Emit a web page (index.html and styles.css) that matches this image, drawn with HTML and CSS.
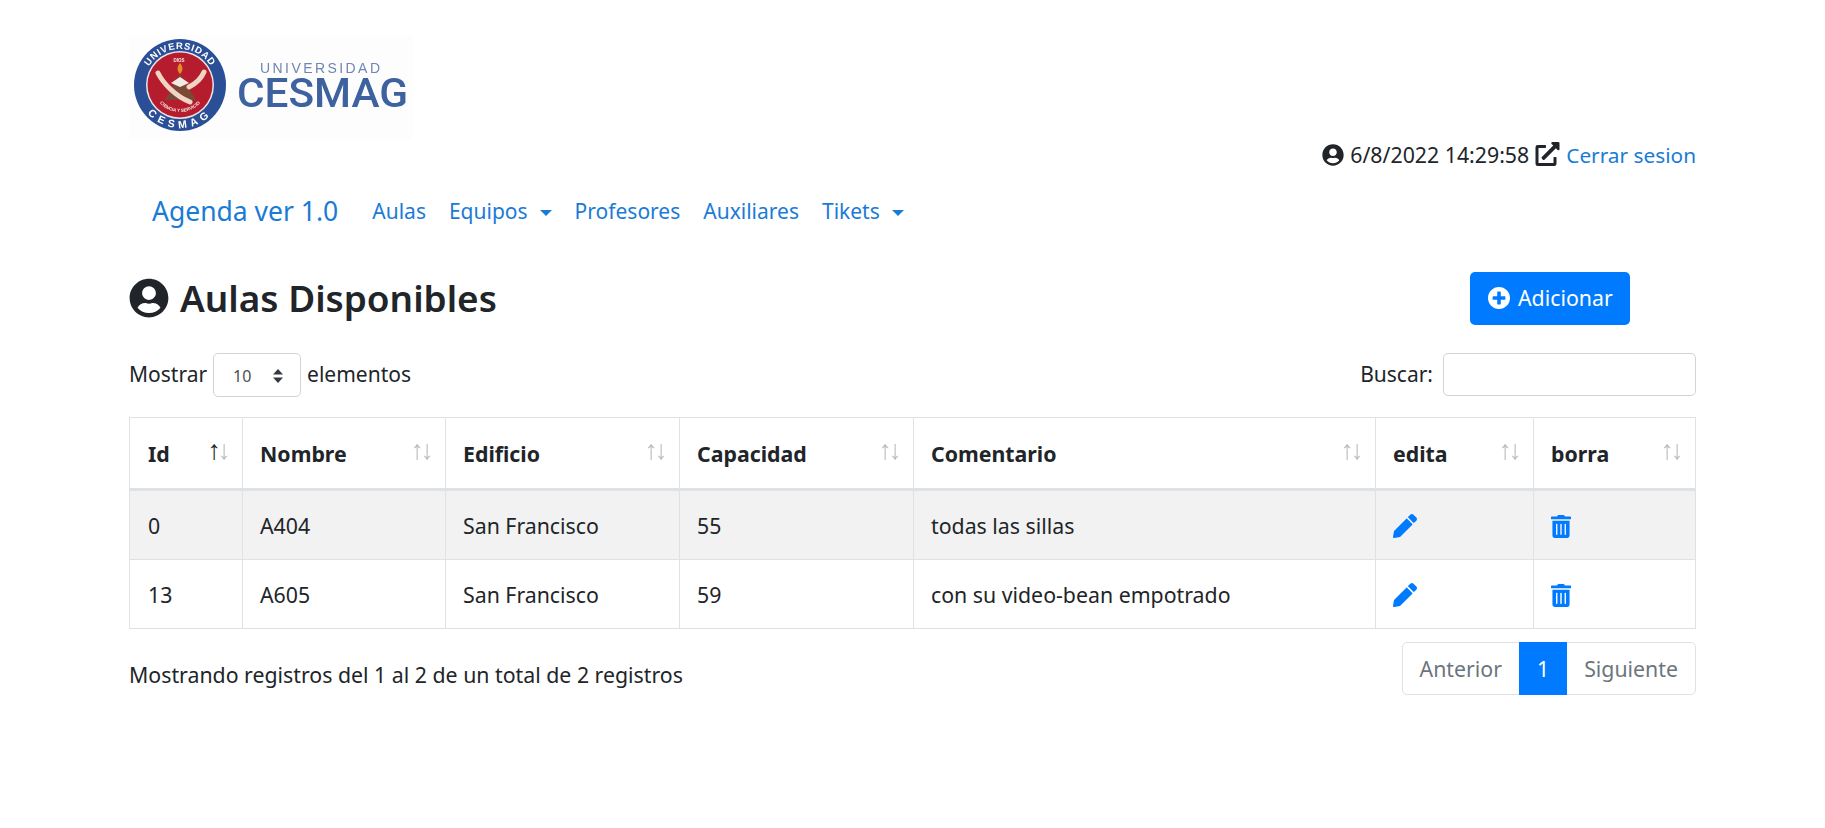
FILE: index.html
```html
<!DOCTYPE html>
<html lang="es">
<head>
<meta charset="utf-8">
<title>Agenda ver 1.0</title>
<link rel="stylesheet" href="styles.css">
</head>
<body>
<div class="container">
  <svg class="logo" viewBox="0 0 284 104" width="284" height="104" aria-label="Universidad CESMAG">
    <defs>
      <filter id="soft"><feGaussianBlur stdDeviation="0.5"/></filter>
      <path id="arcTop" d="M15 50 A36 36 0 0 1 87 50"/>
      <path id="arcBottom" d="M8 50 A43 43 0 0 0 94 50"/>
      <path id="arcSmall" d="M24 50 A27 27 0 0 0 78 50"/>
    </defs>
    <rect width="284" height="104" fill="#fdfdfe"/>
    <g filter="url(#soft)">
      <circle cx="51" cy="50" r="46" fill="#2b4f96"/>
      <circle cx="51" cy="50" r="34" fill="#e8e6ea"/>
      <circle cx="51" cy="50" r="32.500" fill="#b51f2e"/>
      <text class="seal-text"><textPath href="#arcTop" startOffset="50%" text-anchor="middle">UNIVERSIDAD</textPath></text>
      <text class="seal-text seal-bottom"><textPath href="#arcBottom" startOffset="50%" text-anchor="middle">CESMAG</textPath></text>
      <text class="seal-small"><textPath href="#arcSmall" startOffset="50%" text-anchor="middle">CIENCIA Y SERVICIO</textPath></text>
      <text class="seal-small" x="50" y="27" text-anchor="middle">DIOS</text>
      <path d="M51 39l16 26H36z" fill="#7a4a36"/>
      <path d="M42 48l9-6 9 6-9 4z" fill="#f1ebe5"/>
      <path d="M51 28c3.500 4 3 8 0 11-3-3-3.500-7 0-11z" fill="#e8892b"/>
      <path d="M29 38c5 10 17 23 32 29" fill="none" stroke="#f1d5c4" stroke-width="5" stroke-linecap="round"/>
      <path d="M75 37c-3 7-9 12-15 15" fill="none" stroke="#f1d5c4" stroke-width="5" stroke-linecap="round"/>
      <text class="brand-top" x="131" y="38" textLength="120" lengthAdjust="spacing">UNIVERSIDAD</text>
      <text class="brand-main" x="108" y="72" textLength="171" lengthAdjust="spacingAndGlyphs">CESMAG</text>
    </g>
  </svg>

  <div class="session">
    <svg class="ico ico-session" viewBox="0 0 496 512"><path d="M248 8C111 8 0 119 0 256s111 248 248 248 248-111 248-248S385 8 248 8zm0 96c48.600 0 88 39.400 88 88s-39.400 88-88 88-88-39.400-88-88 39.400-88 88-88zm0 344c-58.700 0-111.300-26.600-146.500-68.200 18.800-35.400 55.600-59.800 98.500-59.800 2.400 0 4.800.4 7.100 1.100 13 4.200 26.600 6.900 40.900 6.900 14.300 0 28-2.700 40.900-6.900 2.300-.7 4.700-1.100 7.100-1.100 42.900 0 79.700 24.400 98.500 59.800C359.300 421.400 306.700 448 248 448z"/></svg>
    <span>6/8/2022 14:29:58</span>
    <svg class="ico ico-exit" viewBox="0 0 512 512"><path d="M432 320h-32a16 16 0 0 0-16 16v112H64V128h144a16 16 0 0 0 16-16V80a16 16 0 0 0-16-16H48A48 48 0 0 0 0 112v352a48 48 0 0 0 48 48h352a48 48 0 0 0 48-48V336a16 16 0 0 0-16-16zM488 0H360c-21.370 0-32.050 25.910-17 41l35.730 35.730L135 320.370a24 24 0 0 0 0 34L157.670 377a24 24 0 0 0 34 0l243.610-243.680L471 169c15 15 41 4.500 41-17V24a24 24 0 0 0-24-24z"/></svg>
    <a class="logout" href="#">Cerrar sesion</a>
  </div>

  <nav class="nav">
    <a class="brand" href="#">Agenda ver 1.0</a>
    <a href="#">Aulas</a>
    <a href="#" class="dropdown">Equipos</a>
    <a href="#">Profesores</a>
    <a href="#">Auxiliares</a>
    <a href="#" class="dropdown">Tikets</a>
  </nav>

  <div class="title-row">
    <h1>
      <svg class="ico ico-title" viewBox="0 0 496 512"><path d="M248 8C111 8 0 119 0 256s111 248 248 248 248-111 248-248S385 8 248 8zm0 96c48.600 0 88 39.400 88 88s-39.400 88-88 88-88-39.400-88-88 39.400-88 88-88zm0 344c-58.700 0-111.300-26.600-146.500-68.200 18.800-35.400 55.600-59.800 98.500-59.800 2.400 0 4.800.4 7.100 1.100 13 4.200 26.600 6.900 40.900 6.900 14.300 0 28-2.700 40.900-6.900 2.300-.7 4.700-1.100 7.100-1.100 42.900 0 79.700 24.400 98.500 59.800C359.300 421.400 306.700 448 248 448z"/></svg>
      Aulas Disponibles
    </h1>
    <a class="btn" href="#">
      <svg class="ico ico-btn" viewBox="8 8 496 496"><path d="M256 8C119 8 8 119 8 256s111 248 248 248 248-111 248-248S393 8 256 8zm144 276c0 6.600-5.400 12-12 12h-92v92c0 6.600-5.400 12-12 12h-56c-6.600 0-12-5.400-12-12v-92h-92c-6.600 0-12-5.400-12-12v-56c0-6.600 5.400-12 12-12h92v-92c0-6.600 5.400-12 12-12h56c6.600 0 12 5.400 12 12v92h92c6.600 0 12 5.400 12 12v56z"/></svg>
      Adicionar
    </a>
  </div>

  <div class="filters">
    <div class="length">
      <span>Mostrar</span>
      <div class="select">
        <span>10</span>
        <svg class="carets" viewBox="0 0 12 16"><path d="M6 1l5 5.500H1zM6 15L1 9.500h10z"/></svg>
      </div>
      <span>elementos</span>
    </div>
    <label class="search">Buscar: <input type="text"></label>
  </div>

  <table class="grid">
    <colgroup>
      <col class="c-id"><col class="c-name"><col class="c-building"><col class="c-cap"><col class="c-comment"><col class="c-edit"><col class="c-del">
    </colgroup>
    <thead>
      <tr>
        <th class="sort sort-active">Id</th>
        <th class="sort">Nombre</th>
        <th class="sort">Edificio</th>
        <th class="sort">Capacidad</th>
        <th class="sort">Comentario</th>
        <th class="sort">edita</th>
        <th class="sort">borra</th>
      </tr>
    </thead>
    <tbody>
      <tr class="odd">
        <td>0</td><td>A404</td><td>San Francisco</td><td>55</td><td>todas las sillas</td>
        <td><svg class="ico ico-pencil" viewBox="0 0 512 512"><path d="M497.900 142.100l-46.100 46.100c-4.700 4.700-12.300 4.700-17 0l-111-111c-4.700-4.700-4.700-12.300 0-17l46.100-46.100c18.700-18.700 49.100-18.700 67.900 0l60.100 60.100c18.800 18.700 18.800 49.100 0 67.900zM284.200 99.800L21.600 362.400.4 483.900c-2.900 16.400 11.400 30.600 27.800 27.800l121.500-21.300 262.600-262.600c4.700-4.700 4.700-12.300 0-17l-111-111c-4.800-4.700-12.400-4.700-17.100 0z"/></svg></td>
        <td><svg class="ico ico-trash" viewBox="0 0 448 512"><path d="M32 464a48 48 0 0 0 48 48h288a48 48 0 0 0 48-48V128H32zm272-256a16 16 0 0 1 32 0v224a16 16 0 0 1-32 0zm-96 0a16 16 0 0 1 32 0v224a16 16 0 0 1-32 0zm-96 0a16 16 0 0 1 32 0v224a16 16 0 0 1-32 0zM432 32H312l-9.400-18.700A24 24 0 0 0 281.100 0H166.800a23.720 23.720 0 0 0-21.400 13.300L136 32H16A16 16 0 0 0 0 48v32a16 16 0 0 0 16 16h416a16 16 0 0 0 16-16V48a16 16 0 0 0-16-16z"/></svg></td>
      </tr>
      <tr>
        <td>13</td><td>A605</td><td>San Francisco</td><td>59</td><td>con su video-bean empotrado</td>
        <td><svg class="ico ico-pencil" viewBox="0 0 512 512"><path d="M497.900 142.100l-46.100 46.100c-4.700 4.700-12.300 4.700-17 0l-111-111c-4.700-4.700-4.700-12.300 0-17l46.100-46.100c18.700-18.700 49.100-18.700 67.900 0l60.100 60.100c18.800 18.700 18.800 49.100 0 67.900zM284.200 99.800L21.600 362.400.4 483.900c-2.900 16.400 11.400 30.600 27.800 27.800l121.500-21.300 262.600-262.600c4.700-4.700 4.700-12.300 0-17l-111-111c-4.800-4.700-12.400-4.700-17.100 0z"/></svg></td>
        <td><svg class="ico ico-trash" viewBox="0 0 448 512"><path d="M32 464a48 48 0 0 0 48 48h288a48 48 0 0 0 48-48V128H32zm272-256a16 16 0 0 1 32 0v224a16 16 0 0 1-32 0zm-96 0a16 16 0 0 1 32 0v224a16 16 0 0 1-32 0zm-96 0a16 16 0 0 1 32 0v224a16 16 0 0 1-32 0zM432 32H312l-9.400-18.700A24 24 0 0 0 281.100 0H166.800a23.720 23.720 0 0 0-21.400 13.300L136 32H16A16 16 0 0 0 0 48v32a16 16 0 0 0 16 16h416a16 16 0 0 0 16-16V48a16 16 0 0 0-16-16z"/></svg></td>
      </tr>
    </tbody>
  </table>

  <div class="footer">
    <div class="info">Mostrando registros del 1 al 2 de un total de 2 registros</div>
    <div class="pager">
      <a href="#">Anterior</a>
      <a href="#" class="current">1</a>
      <a href="#">Siguiente</a>
    </div>
  </div>
</div>
</body>
</html>
```
FILE: styles.css
```css
* { box-sizing: border-box; }
html, body { margin: 0; padding: 0; background: #fff; }
body {
  font-family: "Noto Sans", "Open Sans", sans-serif;
  font-size: 21.300px;
  line-height: 30px;
  color: #212529;
}
a { color: #1a7bd6; text-decoration: none; }
.container { padding: 35px 129px 0 129px; }
.ico { display: inline-block; fill: currentColor; flex: none; }

.logo { display: block; }
.seal-text { font: bold 9.500px "Liberation Sans", sans-serif; fill: #fff; letter-spacing: .8px; }
.seal-bottom { letter-spacing: 4.500px; font-size: 10.500px; }
.seal-small { font: bold 4.500px "Liberation Sans", sans-serif; fill: #f6e9e6; }
.brand-top { font: 14px "Liberation Sans", sans-serif; fill: #6f86b3; }
.brand-main { font: 500 40px Roboto, "Liberation Sans", sans-serif; fill: #3d629f; }

.session { display: flex; justify-content: flex-end; align-items: center; gap: 6px; height: 30px; margin-top: 1px; }
.logout { font-size: 20.800px; }
.ico-session { width: 22px; height: 22px; }
.ico-exit { width: 25px; height: 24px; margin-bottom: 2px; }

.nav { display: flex; align-items: center; margin-top: 16px; height: 50px; padding-left: 23px; gap: 23px; font-size: 21px; }
.brand { font-size: 26.500px; margin-right: 11px; }
.dropdown::after {
  content: "";
  display: inline-block;
  margin-left: 12px;
  vertical-align: 3px;
  border-top: 6px solid;
  border-left: 6px solid transparent;
  border-right: 6px solid transparent;
}

.title-row { display: flex; justify-content: space-between; align-items: center; margin-top: 35px; height: 54px; padding-right: 66px; }
h1 { display: flex; align-items: center; gap: 11px; margin: 0; font-size: 36.900px; line-height: 42px; font-weight: 600; }
.ico-title { width: 40px; height: 40px; }
.btn { display: flex; align-items: center; gap: 8px; height: 53px; width: 160px; padding-left: 18px; border-radius: 5px; background: #007bff; color: #fff; }
.ico-btn { width: 22px; height: 22px; }

.filters { display: flex; justify-content: space-between; align-items: center; margin-top: 27px; height: 44px; font-size: 21px; }
.length { display: flex; align-items: center; gap: 6px; }
.select { display: flex; align-items: center; justify-content: space-between; width: 88px; height: 44px; padding: 2px 16px 0 19px; margin-top: 2px; border: 1px solid #ced4da; border-radius: 5px; font-size: 16px; color: #495057; }
.carets { width: 12px; height: 16px; fill: #343a40; }
.search { display: flex; align-items: center; gap: 10px; }
.search input { width: 253px; height: 43px; border: 1px solid #ced4da; border-radius: 5px; background: #fff; }

.grid { width: 1566px; margin-top: 21px; border-collapse: collapse; table-layout: fixed; }
.c-id { width: 113px; } .c-name { width: 203px; } .c-building { width: 234px; } .c-cap { width: 234px; }
.c-comment { width: 462px; } .c-edit { width: 158px; } .c-del { width: 162px; }
.grid th, .grid td { border: 1px solid #dee2e6; padding: 2px 17px 0; text-align: left; }
.grid th:first-child, .grid td:first-child { padding-left: 18px; }
.grid th { position: relative; height: 72px; font-weight: 700; border-bottom: 3px solid #dee2e6; }
.grid td { height: 70px; }
.grid tbody tr:last-child td { height: 69px; }
.odd td { background: #f2f2f2; }
.sort::before, .sort::after { position: absolute; top: 17px; font: 400 27px/30px "Liberation Sans", sans-serif; opacity: .3; }
.sort::before { content: "\2191"; right: 21px; }
.sort::after { content: "\2193"; right: 11px; }
.sort-active::before { opacity: 1; }
.ico-pencil { display: block; width: 24px; height: 24px; color: #007bff; }
.ico-trash { display: block; width: 20px; height: 23px; color: #007bff; }

.footer { display: flex; justify-content: space-between; align-items: flex-start; margin-top: 13px; width: 1567px; }
.info { margin-top: 18px; }
.pager { display: flex; height: 53px; border: 1px solid #dee2e6; border-radius: 5px; }
.pager a { display: flex; align-items: center; padding: 0 17px; color: #6c757d; }
.pager .current { background: #007bff; color: #fff; margin: -1px 0; padding: 0 18px; }
```
